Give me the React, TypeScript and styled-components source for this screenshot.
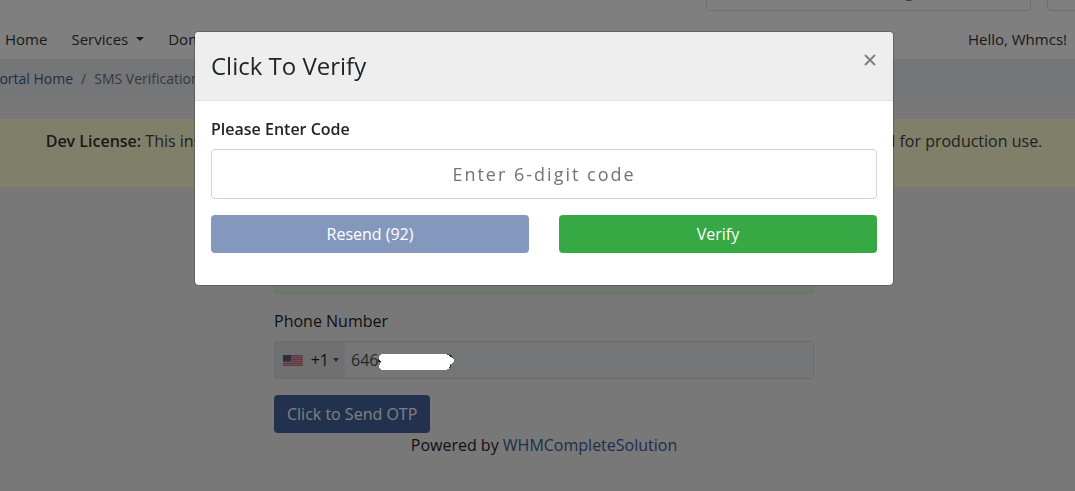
import React, { useState } from "react";
import styled, { createGlobalStyle } from "styled-components";

const GlobalStyle = createGlobalStyle`
  *, *::before, *::after { box-sizing: border-box; }
  body {
    margin: 0;
    background: #f1f1f1;
    color: #212529;
    font: 400 16px/24px "Open Sans", "Noto Sans", sans-serif;
    overflow: hidden;
  }
  a { text-decoration: none; }
  button, input { font-family: inherit; }
`;

const Page = styled.div`
  min-height: 100vh;
  overflow: hidden;
`;

const Container = styled.div`
  width: calc(100% + 35px);
  margin-left: -11px;
`;

const Header = styled.header`
  background: #fff;
`;

const SearchStrip = styled.div`
  display: flex;
  align-items: flex-end;
  justify-content: flex-end;
  gap: 16px;
  height: 11px;
  overflow: hidden;
`;

const SearchBox = styled.div`
  display: flex;
  flex: none;
  width: 325px;
  height: 38px;
  padding-left: 38px;
  border: 1px solid #ddd;
  border-radius: 4px;
`;

const SearchInput = styled.input`
  flex: 1;
  min-width: 0;
  padding: 4px 12px 6px;
  border: 0;
  outline: 0;
  background: transparent;
  font-size: 16px;
  &::placeholder { color: #6c757d; }
`;

const CartBox = styled.a`
  flex: none;
  width: 52px;
  height: 38px;
  border: 1px solid #ddd;
  border-radius: 4px;
`;

const Nav = styled.nav`
  display: flex;
  gap: 24px;
  padding: 16px 16px 8px;
  font-size: 15px;
`;

const NavLink = styled.a<{ $end?: boolean }>`
  display: flex;
  align-items: center;
  gap: 8px;
  margin-left: ${(p) => (p.$end ? "auto" : "0")};
  color: #333;
  white-space: nowrap;
`;

const Caret = styled.span`
  border: 4px solid transparent;
  border-top-color: currentColor;
  border-bottom: 0;
`;

const BreadcrumbBar = styled.nav`
  background: #e9ecef;
`;

const Breadcrumb = styled.ol`
  display: flex;
  gap: 8px;
  margin: 0;
  padding: 9px 2px;
  list-style: none;
  font-size: 14px;
  line-height: 21px;
  color: #6c757d;
`;

const Link = styled.a`
  color: #3d5c9a;
`;

const Main = styled.main`
  padding-top: 21px;
`;

const LicenseNotice = styled.div`
  padding: 10px 0 34px 13px;
  background: #feffd4;
  color: #444;
  text-align: center;
  white-space: nowrap;
  strong { font-weight: 600; color: #333; }
`;

const Content = styled.div`
  padding: 57px 0 0 13px;
`;

const PhoneForm = styled.form`
  display: flex;
  flex-direction: column;
  align-items: flex-start;
  max-width: 540px;
  margin: 0 auto;
`;

const SuccessAlert = styled.div`
  width: 100%;
  height: 50px;
  margin-bottom: 15px;
  border: 1px solid #d0e9c6;
  border-radius: 4px;
  background: #dff0d8;
`;

const PhoneLabel = styled.label`
  margin-bottom: 8px;
`;

const PhoneField = styled.div`
  position: relative;
  display: flex;
  width: 100%;
  height: 38px;
  margin-bottom: 16px;
  border: 1px solid #ced4da;
  border-radius: 4px;
  background: #e9ecef;
`;

const CountryButton = styled.button`
  display: flex;
  align-items: center;
  width: 70px;
  padding: 0 6px 0 8px;
  border: 0;
  background: rgba(0, 0, 0, 0.05);
  color: #212529;
  font-size: 16px;
`;

const DialCode = styled.span`
  margin: 0 4px 0 8px;
`;

const SmallCaret = styled.span`
  border: 3px solid transparent;
  border-top: 4px solid #555;
  border-bottom: 0;
`;

const PhoneInput = styled.input`
  flex: 1;
  min-width: 0;
  padding: 0 6px;
  border: 0;
  outline: 0;
  background: transparent;
  color: #495057;
  font-size: 16px;
`;

const NumberMask = styled.svg`
  position: absolute;
  z-index: 20;
  top: 11px;
  left: 102px;
`;

const Button = styled.button<{ $tone: string; $faded?: boolean }>`
  height: 38px;
  padding: 0 13px;
  border: 0;
  border-radius: 4px;
  background: ${(p) => p.$tone};
  color: #fff;
  font-size: 16px;
  line-height: 24px;
  opacity: ${(p) => (p.$faded ? 0.65 : 1)};
`;

const Powered = styled.p`
  margin: 0;
  text-align: center;
`;

const Backdrop = styled.div`
  position: fixed;
  inset: 0;
  z-index: 10;
  background: rgba(0, 0, 0, 0.5);
`;

const ModalLayer = styled.div`
  position: fixed;
  inset: 0;
  z-index: 30;
  padding: 31px 0 0 13px;
  pointer-events: none;
`;

const Modal = styled.section`
  max-width: 700px;
  margin: 0 auto;
  border: 1px solid rgba(0, 0, 0, 0.2);
  border-radius: 5px;
  background: #fff;
  background-clip: padding-box;
  pointer-events: auto;
`;

const ModalHeader = styled.header`
  display: flex;
  align-items: flex-start;
  justify-content: space-between;
  padding: 16px;
  border-bottom: 1px solid #dee2e6;
  border-radius: 4px 4px 0 0;
  background: #eee;
`;

const ModalTitle = styled.h2`
  margin: 0;
  font-size: 24px;
  line-height: 36px;
  font-weight: 400;
`;

const CloseButton = styled.button`
  display: flex;
  padding: 6px 1px;
  border: 0;
  background: transparent;
  color: #808080;
`;

const ModalBody = styled.form`
  padding: 16px 16px 32px;
`;

const CodeLabel = styled.label`
  display: block;
  margin-bottom: 8px;
  font-weight: 600;
`;

const CodeInput = styled.input`
  display: block;
  width: 100%;
  height: 50px;
  margin-bottom: 16px;
  border: 1px solid #ced4da;
  border-radius: 4px;
  outline: 0;
  color: #495057;
  font-size: 18px;
  letter-spacing: 2px;
  text-align: center;
  &::placeholder { color: #6c757d; opacity: 1; }
`;

const Actions = styled.div`
  display: grid;
  grid-template-columns: 1fr 1fr;
  gap: 30px;
`;

function UsFlag() {
  return (
    <svg width="20" height="11" viewBox="0 0 20 11" shapeRendering="crispEdges" aria-hidden="true">
      <rect width="20" height="11" fill="#d9a3a9" />
      {[0, 2, 4, 6, 8, 10].map((y) => (
        <rect key={y} y={y} width="20" height="1" fill="#c46f7a" />
      ))}
      <rect width="8" height="6" fill="#5c5884" />
    </svg>
  );
}

export default function App() {
  const [code, setCode] = useState("");

  return (
    <>
      <GlobalStyle />
      <Page>
        <Header>
          <Container>
            <SearchStrip>
              <SearchBox>
                <SearchInput aria-label="Search" placeholder="Search our knowledgebase..." />
              </SearchBox>
              <CartBox href="#" aria-label="Cart" />
            </SearchStrip>
            <Nav>
              <NavLink href="#">Home</NavLink>
              <NavLink href="#">Services <Caret /></NavLink>
              <NavLink href="#">Domains <Caret /></NavLink>
              <NavLink href="#" $end>Hello, Whmcs! <Caret /></NavLink>
            </Nav>
          </Container>
        </Header>
        <BreadcrumbBar aria-label="Breadcrumb">
          <Container>
            <Breadcrumb>
              <li><Link href="#">Portal Home</Link></li>
              <li aria-hidden="true">/</li>
              <li>SMS Verification</li>
            </Breadcrumb>
          </Container>
        </BreadcrumbBar>
        <Main>
          <LicenseNotice>
            <strong>Dev License:</strong> This installation of WHMCS is running under a Development License and is not authorized to be used for production use.
          </LicenseNotice>
          <Content>
            <PhoneForm onSubmit={(e) => e.preventDefault()}>
              <SuccessAlert />
              <PhoneLabel htmlFor="phone">Phone Number</PhoneLabel>
              <PhoneField>
                <CountryButton type="button" aria-label="Country code">
                  <UsFlag />
                  <DialCode>+1</DialCode>
                  <SmallCaret />
                </CountryButton>
                <PhoneInput id="phone" type="tel" defaultValue="646" readOnly />
                <NumberMask width="78" height="18" viewBox="0 0 78 18" aria-hidden="true">
                  <path d="M69 1l5 1 2 3-2 2zM72 13l2-1v2l-2 1zM1 6h3v3H1z" fill="#222" />
                  <path d="M4 1H70V2H72V3H73V4H75V5H76V6H77V9H76V10H75V11H73V14H72V16H70V17H4V16H3V15H2V12H3V10H4V8H3V7H2V3H3V2H4Z" fill="#fff" />
                </NumberMask>
              </PhoneField>
              <Button $tone="#43629c">Click to Send OTP</Button>
            </PhoneForm>
            <Powered>
              Powered by <Link href="#">WHMCompleteSolution</Link>
            </Powered>
          </Content>
        </Main>
      </Page>
      <Backdrop />
      <ModalLayer>
        <Modal role="dialog" aria-modal="true" aria-labelledby="verify-title">
          <ModalHeader>
            <ModalTitle id="verify-title">Click To Verify</ModalTitle>
            <CloseButton type="button" aria-label="Close">
              <svg width="12" height="12" viewBox="0 0 12 12" aria-hidden="true">
                <path d="M1 1L11 11M11 1L1 11" stroke="currentColor" strokeWidth="2" />
              </svg>
            </CloseButton>
          </ModalHeader>
          <ModalBody onSubmit={(e) => e.preventDefault()}>
            <CodeLabel htmlFor="code">Please Enter Code</CodeLabel>
            <CodeInput
              id="code"
              inputMode="numeric"
              maxLength={6}
              placeholder="Enter 6-digit code"
              value={code}
              onChange={(e) => setCode(e.target.value)}
            />
            <Actions>
              <Button type="button" $tone="#43629c" $faded>Resend (92)</Button>
              <Button type="submit" $tone="#36a944">Verify</Button>
            </Actions>
          </ModalBody>
        </Modal>
      </ModalLayer>
    </>
  );
}
